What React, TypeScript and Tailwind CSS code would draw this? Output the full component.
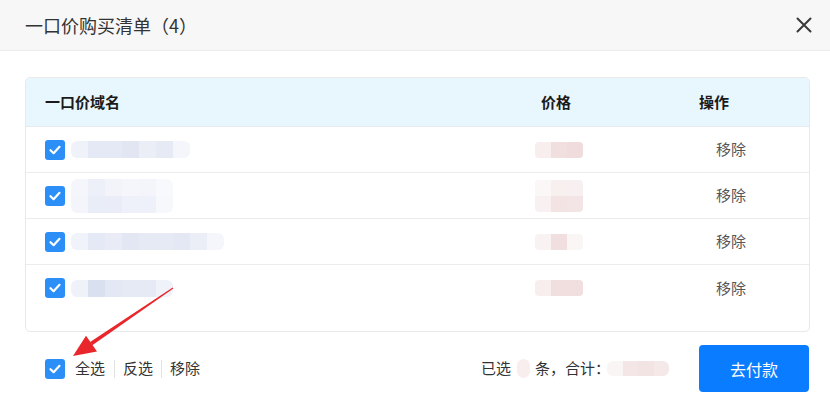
import React from "react";

const font = { fontFamily: '"Noto Sans CJK SC", "Noto Sans", sans-serif' };

function Check() {
  return (
    <div className="w-[20px] h-[20px] rounded-[3px] bg-[#2b8ff7] flex items-center justify-center shrink-0">
      <svg width="14" height="14" viewBox="0 0 14 14">
        <path d="M2.5 7.2 L5.6 10.2 L11.5 3.8" fill="none" stroke="#fff" strokeWidth="2.2" strokeLinecap="round" strokeLinejoin="round" />
      </svg>
    </div>
  );
}

function Cells({ rows, size = 17 }: { rows: string[][]; size?: number }) {
  return (
    <div className="flex flex-col">
      {rows.map((r, i) => (
        <div key={i} className="flex">
          {r.map((c, j) => (
            <div key={j} style={{ width: size, height: size, background: c }} />
          ))}
        </div>
      ))}
    </div>
  );
}

const names: string[][][] = [
  [["#f0f2f9", "#e5e9f5", "#e5e9f5", "#e1e6f2", "#ebeef7", "#e6eaf5", "#f5f6fb"]],
  [
    ["#f5f6fb", "#edf0f8", "#f3f4fa", "#f5f6fb", "#f3f5fa", "#f8f9fc"],
    ["#f3f5fa", "#e9edf7", "#eaedf7", "#eef1f9", "#eef1f9", "#f7f8fc"],
  ],
  [
    ["#f1f3fa", "#e5e9f5", "#e9ecf6", "#e2e7f3", "#e6eaf5", "#e6eaf5", "#e3e8f4", "#ebeef7", "#f5f6fb"],
  ],
  [["#eff2f9", "#d9e1f1", "#e3e8f4", "#e6eaf5", "#e6eaf5", "#f0f2f9"]],
];

const prices: string[][][] = [
  [["#f8eeee", "#f1dede", "#f0dcdc"]],
  [
    ["#fbf7f7", "#f8efef", "#f8f0f0"],
    ["#f9f1f1", "#f3e3e3", "#f3e5e5"],
  ],
  [["#f9f2f2", "#f1dfdf", "#faf6f6"]],
  [["#f8eeee", "#f1dfdf", "#f1dfdf"]],
];

export default function App() {
  return (
    <div className="relative w-[830px] h-[404px] bg-white overflow-hidden" style={font}>
      {/* header */}
      <div className="h-[51px] bg-[#f7f7f7] border-b border-[#ececec] flex items-center justify-between pl-[25px] pr-[17px]">
        <span className="text-[18px] text-[#333] leading-none">一口价购买清单（4）</span>
        <svg width="18" height="18" viewBox="0 0 18 18">
          <path d="M2.5 2.5 L15.5 15.5 M15.5 2.5 L2.5 15.5" stroke="#3a3a3a" strokeWidth="2" strokeLinecap="round" />
        </svg>
      </div>

      {/* table */}
      <div className="ml-[25px] w-[785px] mt-[26px] border border-[#e9e9e9] rounded-[5px] overflow-hidden pb-[20px]">
        <div className="h-[49px] bg-[#e8f6fd] border-b border-[#e6eaee] grid grid-cols-[509px_164px_1fr] items-center text-[15px] font-bold text-[#1a1a1a]">
          <span className="pl-[19px]">一口价域名</span>
          <span className="pl-[6px]">价格</span>
          <span>操作</span>
        </div>
        {names.map((n, i) => (
          <div
            key={i}
            className={`h-[46px] grid grid-cols-[509px_164px_1fr] items-center ${i < 3 ? "border-b border-[#ececec]" : ""}`}
          >
            <div className="pl-[19px] flex items-center gap-[6px]">
              <Check />
              <div className="rounded-[6px] overflow-hidden">
                <Cells rows={n} />
              </div>
            </div>
            <div className="rounded-[4px] overflow-hidden w-fit">
              <Cells rows={prices[i]} size={16} />
            </div>
            <span className="pl-[17px] text-[15px] text-[#555]">移除</span>
          </div>
        ))}
      </div>

      {/* footer */}
      <div className="mt-[13px] h-[47px] flex items-center pl-[45px] pr-[21px]">
        <Check />
        <span className="ml-[10px] text-[15px] text-[#333]">全选</span>
        <span className="ml-[9px] mr-[8px] w-px h-[18px] bg-[#e2e2e2]" />
        <span className="text-[15px] text-[#333]">反选</span>
        <span className="ml-[8px] mr-[8px] w-px h-[18px] bg-[#e2e2e2]" />
        <span className="text-[15px] text-[#333]">移除</span>
        <div className="flex-1" />
        <span className="text-[15px] text-[#333]">已选</span>
        <span className="ml-[6px] w-[13px] h-[19px] rounded-full bg-[#f8eeee]" />
        <span className="ml-[5px] text-[15px] text-[#333]">条，合计：</span>
        <div className="-ml-[3px] w-[62px] rounded-[6px] overflow-hidden">
          <Cells rows={[["#faf5f5", "#f4e6e6", "#f3e4e4", "#f4e8e8"]]} size={15.5} />
        </div>
        <button className="ml-[30px] w-[110px] h-[47px] rounded-[4px] bg-[#0a7cff] text-white text-[16px]">去付款</button>
      </div>

      {/* annotation arrow */}
      <svg className="absolute left-0 top-0 pointer-events-none" width="830" height="404" viewBox="0 0 830 404">
        <polygon points="173.3,288.4 172.7,287.6 90.1,342 92.3,345.2" fill="#e8262b" />
        <polygon points="73,356 86,335.8 97,351.6" fill="#e8262b" />
      </svg>
    </div>
  );
}
